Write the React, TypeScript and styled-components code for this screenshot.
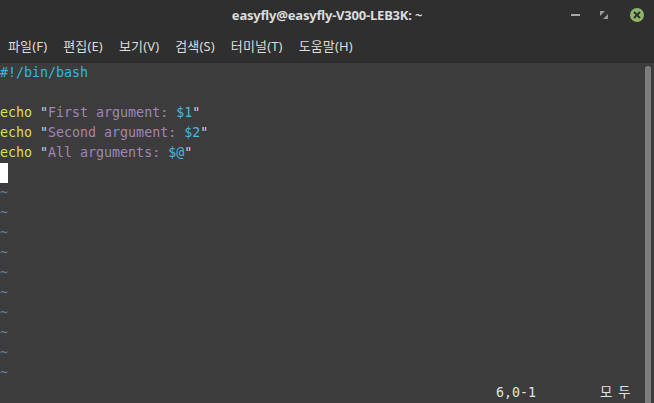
import styled, {createGlobalStyle} from "styled-components";

const GlobalStyle = createGlobalStyle`
    html, body {
        margin: 0;
        padding: 0;
        background: #3c3c3c;
    }
`

const colors = {
    chrome: '#2f2f2f',
    chromeText: '#dcdcdc',
    term: '#3c3c3c',
    shebang: '#35b8d6',
    keyword: '#dede55',
    string: '#a584b4',
    quote: '#d8cfc4',
    variable: '#4cb6dc',
    tilde: '#5b7c9c',
    plain: '#e2e2e2',
}

type Token = { text: string, color: string }

const echoLine = (label: string, v: string): Token[] => [
    {text: 'echo', color: colors.keyword},
    {text: ' ', color: colors.plain},
    {text: '"', color: colors.quote},
    {text: label, color: colors.string},
    {text: v, color: colors.variable},
    {text: '"', color: colors.quote},
]

const lines: Token[][] = [
    [{text: '#!/bin/bash', color: colors.shebang}],
    [],
    echoLine('First argument: ', '$1'),
    echoLine('Second argument: ', '$2'),
    echoLine('All arguments: ', '$@'),
]

const menuItems = ['파일(F)', '편집(E)', '보기(V)', '검색(S)', '터미널(T)', '도움말(H)']

export default function App() {
    return (
        <Window>
            <GlobalStyle/>
            <TitleBar>
                <Title>easyfly@easyfly-V300-LEB3K: ~</Title>
                <Controls>
                    <Minimize/>
                    <Maximize width="8" height="8" viewBox="0 0 8 8">
                        <path d="M0 0h5L0 5z M8 8H3L8 3z" fill="#9a9a9a"/>
                    </Maximize>
                    <Close>
                        <svg width="8" height="8" viewBox="0 0 8 8">
                            <path d="M1 1L7 7M7 1L1 7" stroke="#2f2f2f" strokeWidth="1.8"/>
                        </svg>
                    </Close>
                </Controls>
            </TitleBar>
            <MenuBar>
                {menuItems.map(item => <MenuItem key={item}>{item}</MenuItem>)}
            </MenuBar>
            <Terminal>
                <Screen>
                    {lines.map((line, i) => (
                        <Line key={i}>
                            {line.map((t, j) => <span key={j} style={{color: t.color}}>{t.text}</span>)}
                        </Line>
                    ))}
                    <Line><Cursor/></Line>
                    {Array.from({length: 10}).map((_, i) => <Tilde key={i}>~</Tilde>)}
                    <StatusLine>
                        <Ruler>6,0-1</Ruler>
                        <Position>모두</Position>
                    </StatusLine>
                </Screen>
                <ScrollTrack>
                    <Thumb/>
                </ScrollTrack>
            </Terminal>
        </Window>
    )
}

const Window = styled.div`
    width: 654px;
    height: 403px;
    display: flex;
    flex-direction: column;
    overflow: hidden;
    background: ${colors.term};
`

const TitleBar = styled.div`
    position: relative;
    height: 29px;
    flex-shrink: 0;
    display: flex;
    align-items: center;
    justify-content: center;
    background: ${colors.chrome};
`

const Title = styled.div`
    font-family: "Noto Sans", "Open Sans", sans-serif;
    font-weight: 700;
    font-size: 13px;
    color: ${colors.chromeText};
    letter-spacing: -0.2px;
`

const Controls = styled.div`
    position: absolute;
    right: 10px;
    top: 0;
    height: 29px;
    display: flex;
    align-items: center;
    gap: 20px;
`

const Minimize = styled.div`
    width: 9px;
    height: 2px;
    background: #a8a8a8;
`

const Maximize = styled.svg`
    display: block;
    margin-right: 2px;
`

const Close = styled.div`
    width: 14px;
    height: 14px;
    border-radius: 50%;
    background: #8eb56a;
    display: flex;
    align-items: center;
    justify-content: center;
`

const MenuBar = styled.div`
    height: 33px;
    flex-shrink: 0;
    display: flex;
    align-items: center;
    background: ${colors.chrome};
    border-bottom: 1px solid #2a2a2a;
`

const MenuItem = styled.div`
    padding: 0 8px;
    font-family: "Noto Sans", "Noto Sans CJK KR", sans-serif;
    font-size: 13px;
    letter-spacing: 0.15px;
    color: ${colors.chromeText};
`

const Terminal = styled.div`
    flex: 1;
    display: flex;
    min-height: 0;
`

const Screen = styled.div`
    flex: 1;
    font-family: "DejaVu Sans Mono", monospace;
    font-size: 13.3px;
    line-height: 20px;
    white-space: pre;
    color: ${colors.plain};
`

const Line = styled.div`
    height: 20px;
`

const Cursor = styled.span`
    display: inline-block;
    width: 8px;
    height: 20px;
    vertical-align: top;
    background: #ffffff;
`

const Tilde = styled.div`
    height: 20px;
    color: ${colors.tilde};
`

const StatusLine = styled.div`
    height: 20px;
    display: flex;
`

const Ruler = styled.span`
    margin-left: 496px;
    width: 104px;
`

const Position = styled.span`
    font-family: "DejaVu Sans Mono", "Noto Sans CJK KR", monospace;
    letter-spacing: 6px;
`

const ScrollTrack = styled.div`
    width: 10px;
    flex-shrink: 0;
    padding-top: 3px;
    display: flex;
    justify-content: flex-start;
`

const Thumb = styled.div`
    width: 6px;
    height: 100%;
    margin-left: 1px;
    border-radius: 3px 3px 0 0;
    background: #7d7d7d;
`
